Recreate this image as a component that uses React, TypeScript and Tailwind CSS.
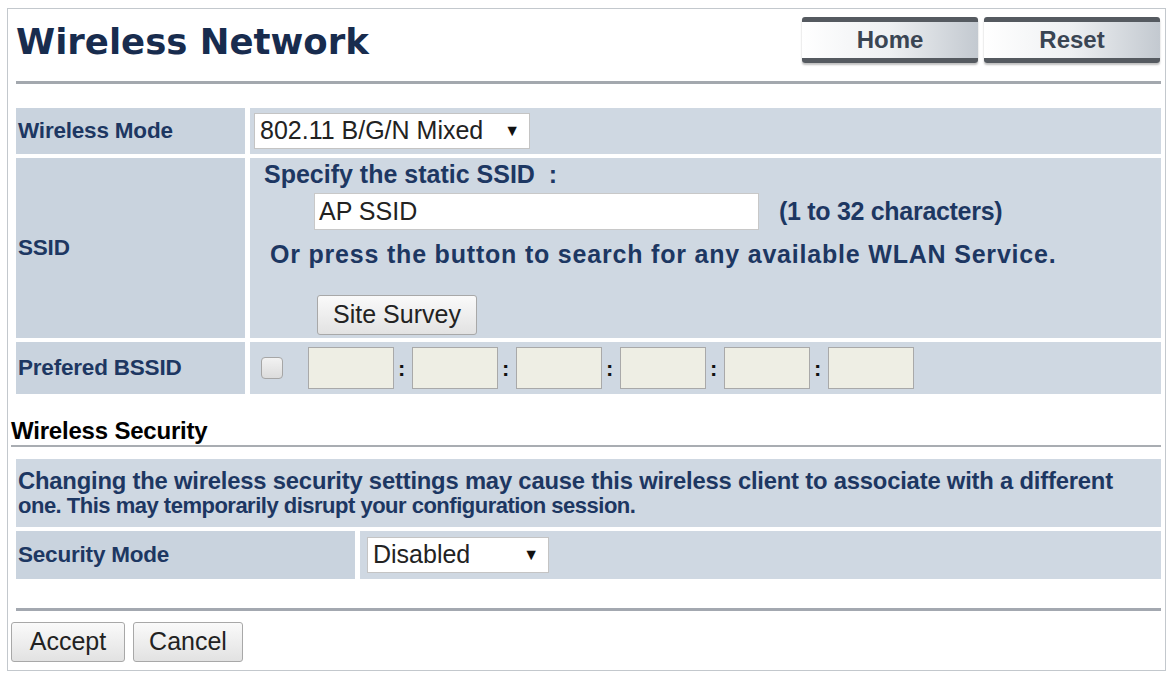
import React from "react";

const label = "font-['Liberation_Sans',Arial,sans-serif] text-[22.5px] font-bold tracking-[-0.2px] text-[#1d3762]";
const note = "font-['Liberation_Sans',Arial,sans-serif] text-[25px] font-bold text-[#1d3762]";
const plain = "font-['Liberation_Sans',Arial,sans-serif] text-[25px] text-[#222]";

function NavButton({ children }: { children: React.ReactNode }) {
  return (
    <button
      type="button"
      className="flex h-[46px] w-[176px] items-center justify-center rounded-[3px] border-y-[5px] border-[#555a60] bg-gradient-to-r from-white via-[#eef0f2] to-[#c3c9d0] font-['Liberation_Sans',Arial,sans-serif] text-[24px] font-bold text-[#3a4553] shadow-[0_2px_2px_rgba(0,0,0,0.25)]"
    >
      {children}
    </button>
  );
}

function Select({ value, width }: { value: string; width: string }) {
  return (
    <div
      className={`flex h-[36px] items-center justify-between border border-[#c4c4c4] bg-white pl-[5px] pr-[9px] ${width} ${plain}`}
    >
      <span>{value}</span>
      <span className="text-[16px] text-[#111]">▼</span>
    </div>
  );
}

function PlainButton({ children, width }: { children: React.ReactNode; width: string }) {
  return (
    <button
      type="button"
      className={`flex h-[40px] items-center justify-center rounded-[3px] border border-[#a8a8a8] bg-gradient-to-b from-[#fafafa] to-[#e2e2e2] ${width} ${plain}`}
    >
      {children}
    </button>
  );
}

export default function App() {
  const octets = [0, 1, 2, 3, 4, 5];

  return (
    <div className="h-[676px] w-[1171px] bg-white pl-[7px] pt-[8px]">
      <div className="flex h-[663px] w-[1159px] flex-col border border-[#c3c8cd] pl-[8px] pr-[4px]">
        {/* page header */}
        <div className="flex h-[72px] items-start justify-between">
          <h1 className="pt-[13px] font-['DejaVu_Sans',Verdana,sans-serif] text-[35.5px] font-bold leading-[40px] text-[#182c4e]">
            Wireless Network
          </h1>
          <div className="flex gap-[6px] pr-[1px] pt-[8px]">
            <NavButton>Home</NavButton>
            <NavButton>Reset</NavButton>
          </div>
        </div>
        <div className="h-[3px] bg-[#a3a8ae]" />

        {/* wireless settings */}
        <div className="mt-[24px] flex flex-col gap-[4px]">
          <div className="flex h-[46px] gap-[5px]">
            <div className={`flex w-[229px] items-center bg-[#c9d3de] pl-[2px] ${label}`}>Wireless Mode</div>
            <div className="flex flex-1 items-center bg-[#cfd8e2] pl-[4px]">
              <Select value="802.11 B/G/N Mixed" width="w-[276px]" />
            </div>
          </div>

          <div className="flex h-[180px] gap-[5px]">
            <div className={`flex w-[229px] items-center bg-[#c9d3de] pl-[2px] ${label}`}>SSID</div>
            <div className="flex flex-1 flex-col bg-[#cfd8e2] pl-[14px] pt-[2px]">
              <div className={`${note} leading-[28px]`}>Specify the static SSID&nbsp; :</div>
              <div className="mt-[5px] flex items-center">
                <div className={`ml-[50px] flex h-[37px] w-[445px] items-center border border-[#c8c8c8] bg-white pl-[4px] ${plain}`}>
                  AP SSID
                </div>
                <div className={`ml-[20px] tracking-[-0.3px] ${note}`}>(1 to 32 characters)</div>
              </div>
              <div className={`ml-[6px] mt-[8px] leading-[30px] tracking-[0.8px] ${note}`}>
                Or press the button to search for any available WLAN Service.
              </div>
              <div className="ml-[53px] mt-[26px]">
                <PlainButton width="w-[160px]">Site Survey</PlainButton>
              </div>
            </div>
          </div>

          <div className="flex h-[52px] gap-[5px]">
            <div className={`flex w-[229px] items-center bg-[#c9d3de] pl-[2px] ${label}`}>Prefered BSSID</div>
            <div className="flex flex-1 items-center bg-[#cfd8e2] pl-[11px]">
              <div className="h-[22px] w-[22px] rounded-[4px] border border-[#a6a6a6] bg-gradient-to-b from-[#f2f2f2] to-[#dcdcdc]" />
              <div className="ml-[25px] flex items-center">
                {octets.map((i) => (
                  <React.Fragment key={i}>
                    {i > 0 && (
                      <span className="w-[18px] pl-[4px] font-['Liberation_Sans',Arial,sans-serif] text-[22px] font-bold text-[#111]">:</span>
                    )}
                    <div className="h-[42px] w-[86px] border border-[#a9a9a9] bg-[#eeeee4]" />
                  </React.Fragment>
                ))}
              </div>
            </div>
          </div>
        </div>

        {/* wireless security */}
        <div className="-ml-[5px] mt-[25px] font-['Liberation_Sans',Arial,sans-serif] text-[24px] font-bold leading-[24px] tracking-[-0.2px] text-black">
          Wireless Security
        </div>
        <div className="-ml-[5px] mt-[2px] h-[2px] bg-[#a9adb2]" />

        <div className="mt-[12px] flex flex-col gap-[4px]">
          <div className="flex h-[68px] flex-col justify-center bg-[#cfd8e2] pl-[2px] font-['Liberation_Sans',Arial,sans-serif] font-bold leading-[25px] text-[#1d3762]">
            <span className="text-[23.8px] tracking-[-0.2px]">
              Changing the wireless security settings may cause this wireless client to associate with a different
            </span>
            <span className="text-[22px] tracking-[-0.5px]">
              one. This may temporarily disrupt your configuration session.
            </span>
          </div>
          <div className="flex h-[48px] gap-[5px]">
            <div className={`flex w-[339px] items-center bg-[#c9d3de] pl-[2px] ${label}`}>Security Mode</div>
            <div className="flex flex-1 items-center bg-[#cfd8e2] pl-[7px]">
              <Select value="Disabled" width="w-[182px]" />
            </div>
          </div>
        </div>

        <div className="mt-[29px] h-[3px] bg-[#a3a8b0]" />

        <div className="-ml-[5px] mt-[11px] flex gap-[8px]">
          <PlainButton width="w-[114px]">Accept</PlainButton>
          <PlainButton width="w-[110px]">Cancel</PlainButton>
        </div>
      </div>
    </div>
  );
}
